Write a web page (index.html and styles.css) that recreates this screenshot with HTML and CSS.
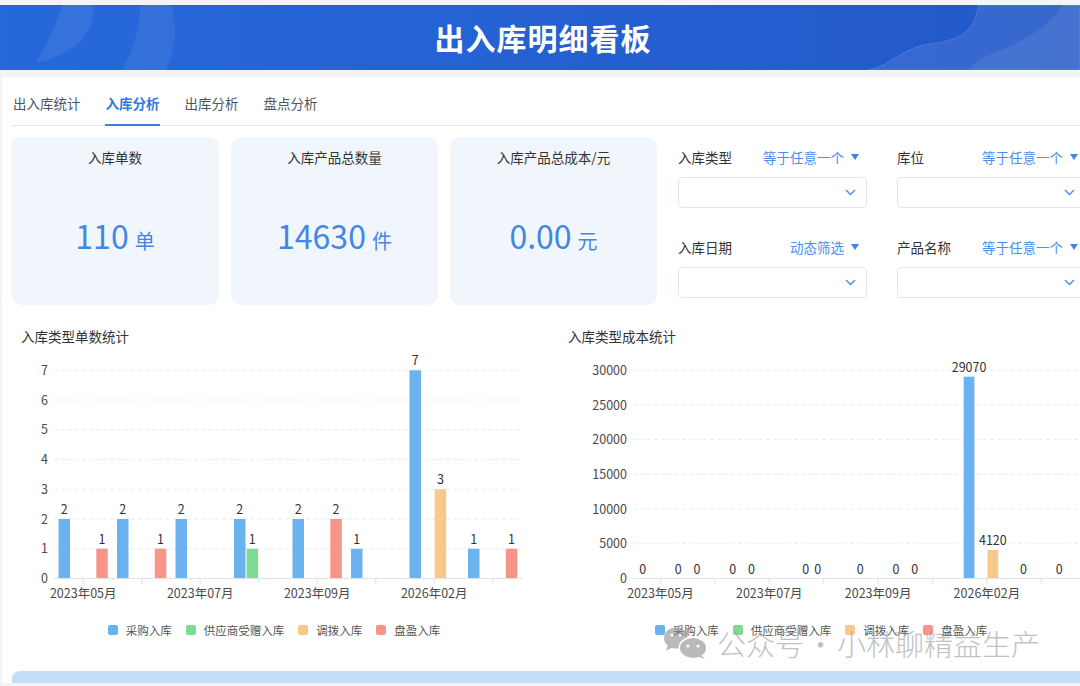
FILE: index.html
```html
<!DOCTYPE html>
<html lang="zh-CN">
<head>
    <meta charset="UTF-8">
    <meta name="viewport" content="width=device-width, initial-scale=1.0">
    <title>出入库明细看板</title>
    <link rel="stylesheet" href="styles.css">
</head>
<body>
    <div class="header">
        <!-- background waves -->
        <svg class="header-deco" width="1080" height="65" viewBox="0 0 1080 65">
            <path d="M62 0 L93 0 Q96 44 36 58 Q52 32 62 0 Z" fill="#ffffff" fill-opacity="0.07"/>
            <path d="M141 0 L171 0 Q181 34 166 65 L123 65 Q139 32 141 0 Z" fill="#ffffff" fill-opacity="0.07"/>
            <path d="M978 0 C976 26 958 36 930 39 C902 42 894 60 868 65 L1080 65 L1080 0 Z" fill="#ffffff" fill-opacity="0.09" stroke="#ffffff" stroke-opacity="0.14"/>
            <path d="M1063 0 C1045 28 1012 40 994 48 C978 55 972 61 968 65 L1080 65 L1080 0 Z" fill="#ffffff" fill-opacity="0.08"/>
        </svg>
        <h1>出入库明细看板</h1>
    </div>

    <div class="main">
        <div class="tabs">
            <div class="tab">出入库统计</div>
            <div class="tab active">入库分析</div>
            <div class="tab">出库分析</div>
            <div class="tab">盘点分析</div>
        </div>

        <div class="overview">
            <div class="card">
                <div class="card-title">入库单数</div>
                <div class="card-value">110<span class="unit">单</span></div>
            </div>
            <div class="card">
                <div class="card-title">入库产品总数量</div>
                <div class="card-value">14630<span class="unit">件</span></div>
            </div>
            <div class="card">
                <div class="card-title">入库产品总成本/元</div>
                <div class="card-value">0.00<span class="unit">元</span></div>
            </div>

            <div class="filters">
                <div class="filter">
                    <div class="filter-head"><span>入库类型</span><span class="filter-mode">等于任意一个<i class="caret"></i></span></div>
                    <div class="select"><svg width="11" height="7" viewBox="0 0 11 7"><polyline points="1,1 5.5,5.5 10,1" fill="none" stroke="#4a8ae0" stroke-width="1.4"/></svg></div>
                </div>
                <div class="filter">
                    <div class="filter-head"><span>库位</span><span class="filter-mode">等于任意一个<i class="caret"></i></span></div>
                    <div class="select"><svg width="11" height="7" viewBox="0 0 11 7"><polyline points="1,1 5.5,5.5 10,1" fill="none" stroke="#4a8ae0" stroke-width="1.4"/></svg></div>
                </div>
                <div class="filter">
                    <div class="filter-head"><span>入库日期</span><span class="filter-mode">动态筛选<i class="caret"></i></span></div>
                    <div class="select"><svg width="11" height="7" viewBox="0 0 11 7"><polyline points="1,1 5.5,5.5 10,1" fill="none" stroke="#4a8ae0" stroke-width="1.4"/></svg></div>
                </div>
                <div class="filter">
                    <div class="filter-head"><span>产品名称</span><span class="filter-mode">等于任意一个<i class="caret"></i></span></div>
                    <div class="select"><svg width="11" height="7" viewBox="0 0 11 7"><polyline points="1,1 5.5,5.5 10,1" fill="none" stroke="#4a8ae0" stroke-width="1.4"/></svg></div>
                </div>
            </div>
        </div>

        <div class="charts">
            <!-- order count by type -->
            <div class="chart">
                <div class="chart-title">入库类型单数统计</div>
                <svg class="plot" width="526" height="256" viewBox="0 0 526 256">
                    <g class="grid">
                        <line x1="43" y1="198.75" x2="511" y2="198.75"/>
                        <line x1="43" y1="169" x2="511" y2="169"/>
                        <line x1="43" y1="139.25" x2="511" y2="139.25"/>
                        <line x1="43" y1="109.5" x2="511" y2="109.5"/>
                        <line x1="43" y1="79.75" x2="511" y2="79.75"/>
                        <line x1="43" y1="50" x2="511" y2="50"/>
                        <line x1="43" y1="20.25" x2="511" y2="20.25"/>
                    </g>
                    <g class="y-labels">
                        <text x="37" y="233">0</text>
                        <text x="37" y="203.25">1</text>
                        <text x="37" y="173.5">2</text>
                        <text x="37" y="143.75">3</text>
                        <text x="37" y="114">4</text>
                        <text x="37" y="84.25">5</text>
                        <text x="37" y="54.5">6</text>
                        <text x="37" y="24.75">7</text>
                    </g>
                    <g class="bars">
                        <rect class="b-blue" x="47.5" y="169" width="11.5" height="59.5"/>
                        <rect class="b-red" x="85.3" y="198.75" width="11.5" height="29.75"/>
                        <rect class="b-blue" x="106" y="169" width="11.5" height="59.5"/>
                        <rect class="b-red" x="143.8" y="198.75" width="11.5" height="29.75"/>
                        <rect class="b-blue" x="164.5" y="169" width="11.5" height="59.5"/>
                        <rect class="b-blue" x="223" y="169" width="11.5" height="59.5"/>
                        <rect class="b-green" x="235.6" y="198.75" width="11.5" height="29.75"/>
                        <rect class="b-blue" x="281.5" y="169" width="11.5" height="59.5"/>
                        <rect class="b-red" x="319.3" y="169" width="11.5" height="59.5"/>
                        <rect class="b-blue" x="340" y="198.75" width="11.5" height="29.75"/>
                        <rect class="b-blue" x="398.5" y="20.25" width="11.5" height="208.25"/>
                        <rect class="b-orange" x="423.7" y="139.25" width="11.5" height="89.25"/>
                        <rect class="b-blue" x="457" y="198.75" width="11.5" height="29.75"/>
                        <rect class="b-red" x="494.8" y="198.75" width="11.5" height="29.75"/>
                    </g>
                    <g class="values">
                        <text x="53.25" y="164">2</text>
                        <text x="91.05" y="193.75">1</text>
                        <text x="111.75" y="164">2</text>
                        <text x="149.55" y="193.75">1</text>
                        <text x="170.25" y="164">2</text>
                        <text x="228.75" y="164">2</text>
                        <text x="241.35" y="193.75">1</text>
                        <text x="287.25" y="164">2</text>
                        <text x="325.05" y="164">2</text>
                        <text x="345.75" y="193.75">1</text>
                        <text x="404.25" y="15.25">7</text>
                        <text x="429.45" y="134.25">3</text>
                        <text x="462.75" y="193.75">1</text>
                        <text x="500.55" y="193.75">1</text>
                    </g>
                    <line class="axis" x1="43" y1="228.5" x2="511" y2="228.5"/>
                    <g class="axis">
                        <line x1="72.25" y1="228.5" x2="72.25" y2="233.5"/>
                        <line x1="130.75" y1="228.5" x2="130.75" y2="233.5"/>
                        <line x1="189.25" y1="228.5" x2="189.25" y2="233.5"/>
                        <line x1="247.75" y1="228.5" x2="247.75" y2="233.5"/>
                        <line x1="306.25" y1="228.5" x2="306.25" y2="233.5"/>
                        <line x1="364.75" y1="228.5" x2="364.75" y2="233.5"/>
                        <line x1="423.25" y1="228.5" x2="423.25" y2="233.5"/>
                        <line x1="481.75" y1="228.5" x2="481.75" y2="233.5"/>
                    </g>
                    <g class="x-labels">
                        <text x="72.25" y="248">2023年05月</text>
                        <text x="189.25" y="248">2023年07月</text>
                        <text x="306.25" y="248">2023年09月</text>
                        <text x="423.25" y="248">2026年02月</text>
                    </g>
                </svg>
                <div class="legend">
                    <span class="legend-item"><i class="dot blue"></i>采购入库</span>
                    <span class="legend-item"><i class="dot green"></i>供应商受赠入库</span>
                    <span class="legend-item"><i class="dot orange"></i>调拨入库</span>
                    <span class="legend-item"><i class="dot red"></i>盘盈入库</span>
                </div>
            </div>

            <!-- cost by type -->
            <div class="chart">
                <div class="chart-title">入库类型成本统计</div>
                <svg class="plot" width="526" height="256" viewBox="0 0 526 256">
                    <g class="grid">
                        <line x1="75" y1="193.79" x2="526" y2="193.79"/>
                        <line x1="75" y1="159.08" x2="526" y2="159.08"/>
                        <line x1="75" y1="124.38" x2="526" y2="124.38"/>
                        <line x1="75" y1="89.67" x2="526" y2="89.67"/>
                        <line x1="75" y1="54.96" x2="526" y2="54.96"/>
                        <line x1="75" y1="20.25" x2="526" y2="20.25"/>
                    </g>
                    <g class="y-labels">
                        <text x="69" y="233">0</text>
                        <text x="69" y="198.3">5000</text>
                        <text x="69" y="163.6">10000</text>
                        <text x="69" y="128.9">15000</text>
                        <text x="69" y="94.2">20000</text>
                        <text x="69" y="59.5">25000</text>
                        <text x="69" y="24.75">30000</text>
                    </g>
                    <g class="bars">
                        <rect class="b-blue" x="405.65" y="26.7" width="10.8" height="201.8"/>
                        <rect class="b-orange" x="429.45" y="199.9" width="10.8" height="28.6"/>
                    </g>
                    <g class="values">
                        <text x="84.65" y="223.5">0</text>
                        <text x="120.35" y="223.5">0</text>
                        <text x="139.05" y="223.5">0</text>
                        <text x="174.75" y="223.5">0</text>
                        <text x="193.45" y="223.5">0</text>
                        <text x="247.85" y="223.5">0</text>
                        <text x="259.75" y="223.5">0</text>
                        <text x="302.25" y="223.5">0</text>
                        <text x="337.95" y="223.5">0</text>
                        <text x="356.65" y="223.5">0</text>
                        <text x="411.05" y="21.7">29070</text>
                        <text x="434.85" y="194.9">4120</text>
                        <text x="465.45" y="223.5">0</text>
                        <text x="501.15" y="223.5">0</text>
                    </g>
                    <line class="axis" x1="75" y1="228.5" x2="526" y2="228.5"/>
                    <g class="axis">
                        <line x1="102.5" y1="228.5" x2="102.5" y2="233.5"/>
                        <line x1="156.9" y1="228.5" x2="156.9" y2="233.5"/>
                        <line x1="211.3" y1="228.5" x2="211.3" y2="233.5"/>
                        <line x1="265.7" y1="228.5" x2="265.7" y2="233.5"/>
                        <line x1="320.1" y1="228.5" x2="320.1" y2="233.5"/>
                        <line x1="374.5" y1="228.5" x2="374.5" y2="233.5"/>
                        <line x1="428.9" y1="228.5" x2="428.9" y2="233.5"/>
                        <line x1="483.3" y1="228.5" x2="483.3" y2="233.5"/>
                    </g>
                    <g class="x-labels">
                        <text x="102.5" y="248">2023年05月</text>
                        <text x="211.3" y="248">2023年07月</text>
                        <text x="320.1" y="248">2023年09月</text>
                        <text x="428.9" y="248">2026年02月</text>
                    </g>
                </svg>
                <div class="legend">
                    <span class="legend-item"><i class="dot blue"></i>采购入库</span>
                    <span class="legend-item"><i class="dot green"></i>供应商受赠入库</span>
                    <span class="legend-item"><i class="dot orange"></i>调拨入库</span>
                    <span class="legend-item"><i class="dot red"></i>盘盈入库</span>
                </div>
            </div>
        </div>

        <div class="next-section"></div>

        <!-- watermark over the page -->
        <div class="watermark">
            <svg width="46" height="34" viewBox="0 0 46 34">
                <ellipse cx="13" cy="12" rx="12" ry="10.5" fill="#8c8c8c"/>
                <path d="M5 19 L3 25 L10 21 Z" fill="#8c8c8c"/>
                <ellipse cx="30" cy="22" rx="14.5" ry="11.5" fill="#ffffff"/>
                <ellipse cx="30" cy="22" rx="13" ry="10" fill="#8c8c8c"/>
                <path d="M38 29 L42 33 L35 30.5 Z" fill="#8c8c8c"/>
                <circle cx="9" cy="9" r="1.6" fill="#ffffff"/>
                <circle cx="17" cy="9" r="1.6" fill="#ffffff"/>
                <circle cx="25" cy="20" r="1.6" fill="#ffffff"/>
                <circle cx="35" cy="20" r="1.6" fill="#ffffff"/>
            </svg>
            <span>公众号<b class="sep">·</b>小林聊精益生产</span>
        </div>
    </div>
</body>
</html>
```

FILE: styles.css
```css
body {
    margin: 0;
    padding-top: 5px;
    height: 686px;
    box-sizing: border-box;
    overflow: hidden;
    background-color: #f3f4f8;
    font-family: "Noto Sans CJK SC", "Liberation Sans", sans-serif;
    color: #333;
}

/* Title bar */
.header {
    position: relative;
    height: 65px;
    background: linear-gradient(90deg, #2669db, #2358c9);
    overflow: hidden;
}
.header-deco {
    position: absolute;
    left: 0;
    top: 0;
}
.header h1 {
    position: relative;
    margin: 0;
    padding-left: 6px;
    line-height: 65px;
    font-size: 30px;
    font-weight: bold;
    letter-spacing: 1px;
    color: #fff;
    text-align: center;
}

.main {
    position: relative;
    margin: 7px 0 0 2px;
    padding-left: 9px;
    background-color: #fff;
    overflow: hidden;
}

/* Tabs */
.tabs {
    display: flex;
    gap: 24px;
    margin-left: 1px;
    border-bottom: 1px solid #e6e8ed;
}
.tab {
    padding: 16px 0 11px 1px;
    line-height: 20px;
    font-size: 13.5px;
    color: #4e5561;
    border-bottom: 2px solid transparent;
    margin-bottom: -1px;
}
.tab.active {
    color: #2f7be0;
    font-weight: bold;
    border-bottom-color: #3b82e6;
}

/* KPI cards + filters */
.overview {
    display: flex;
    margin-top: 11px;
}
.card {
    flex-shrink: 0;
    width: 208px;
    height: 168px;
    margin-right: 12px;
    background-color: #f1f6fd;
    border-radius: 10px;
    display: flex;
    flex-direction: column;
}
.card + .card {
    width: 207px;
}
.card-title {
    padding-top: 10px;
    line-height: 20px;
    font-size: 13.5px;
    color: #333;
    text-align: center;
}
.card-value {
    display: flex;
    justify-content: center;
    align-items: baseline;
    padding-top: 52px;
    line-height: 32px;
    font-size: 32px;
    color: #4287e6;
}
.card-value .unit {
    margin-left: 6px;
    font-size: 20px;
}

.filters {
    flex-shrink: 0;
    display: grid;
    grid-template-columns: 189px 189px;
    column-gap: 30px;
    row-gap: 29px;
    margin-left: 9px;
    padding-top: 10px;
    align-content: start;
}
.filter-head {
    display: flex;
    justify-content: space-between;
    align-items: center;
    padding-right: 8px;
    margin-bottom: 10px;
    line-height: 20px;
    font-size: 13.5px;
    color: #333;
}
.filter-mode {
    color: #4b8fea;
    display: flex;
    align-items: center;
}
.caret {
    width: 0;
    height: 0;
    margin-left: 7px;
    border-left: 4.5px solid transparent;
    border-right: 4.5px solid transparent;
    border-top: 6px solid #3d86e8;
}
.select {
    height: 29px;
    border: 1px solid #e2e5eb;
    border-radius: 4px;
    display: flex;
    justify-content: flex-end;
    align-items: center;
    padding-right: 10px;
}

/* Charts */
.charts {
    display: flex;
    gap: 21px;
    margin-top: 21px;
}
.chart {
    width: 526px;
    flex-shrink: 0;
}
.chart-title {
    padding-left: 10px;
    margin-bottom: 4px;
    line-height: 20px;
    font-size: 13.5px;
    color: #333;
}
.plot {
    display: block;
    font-family: "Noto Sans CJK SC", "Liberation Sans", sans-serif;
    font-size: 12.5px;
}
.grid line {
    stroke: #e9ecf0;
    stroke-dasharray: 4 3;
}
.axis, .axis line {
    stroke: #dfe3e9;
    stroke-width: 1.2;
}
.y-labels text {
    text-anchor: end;
    fill: #4a4a4a;
}
.x-labels text {
    text-anchor: middle;
    fill: #4a4a4a;
}
.values text {
    text-anchor: middle;
    fill: #333;
}
.b-blue { fill: #6ab3ef; }
.b-green { fill: #7edb94; }
.b-orange { fill: #f9c98b; }
.b-red { fill: #f7958a; }

.legend {
    display: flex;
    justify-content: center;
    gap: 14px;
    margin-top: 14px;
    line-height: 20px;
    font-size: 11.5px;
    color: #555;
}
.legend-item {
    display: flex;
    align-items: center;
}
.dot {
    width: 10px;
    height: 10px;
    border-radius: 2px;
    margin-right: 8px;
}
.dot.blue { background-color: #6ab3ef; }
.dot.green { background-color: #7edb94; }
.dot.orange { background-color: #f9c98b; }
.dot.red { background-color: #f7958a; }

.next-section {
    margin: 31px 0 0 1px;
    height: 12px;
    background-color: #c4ddf9;
    border-radius: 8px 0 0 0;
}

/* Watermark */
.watermark {
    position: absolute;
    left: 661px;
    top: 549px;
    display: flex;
    align-items: center;
    gap: 8px;
    opacity: 0.6;
    font-size: 29px;
    font-weight: 300;
    line-height: 34px;
    color: #999;
    pointer-events: none;
}
.watermark .sep {
    font-weight: 300;
    margin: 0 2px;
}
```
